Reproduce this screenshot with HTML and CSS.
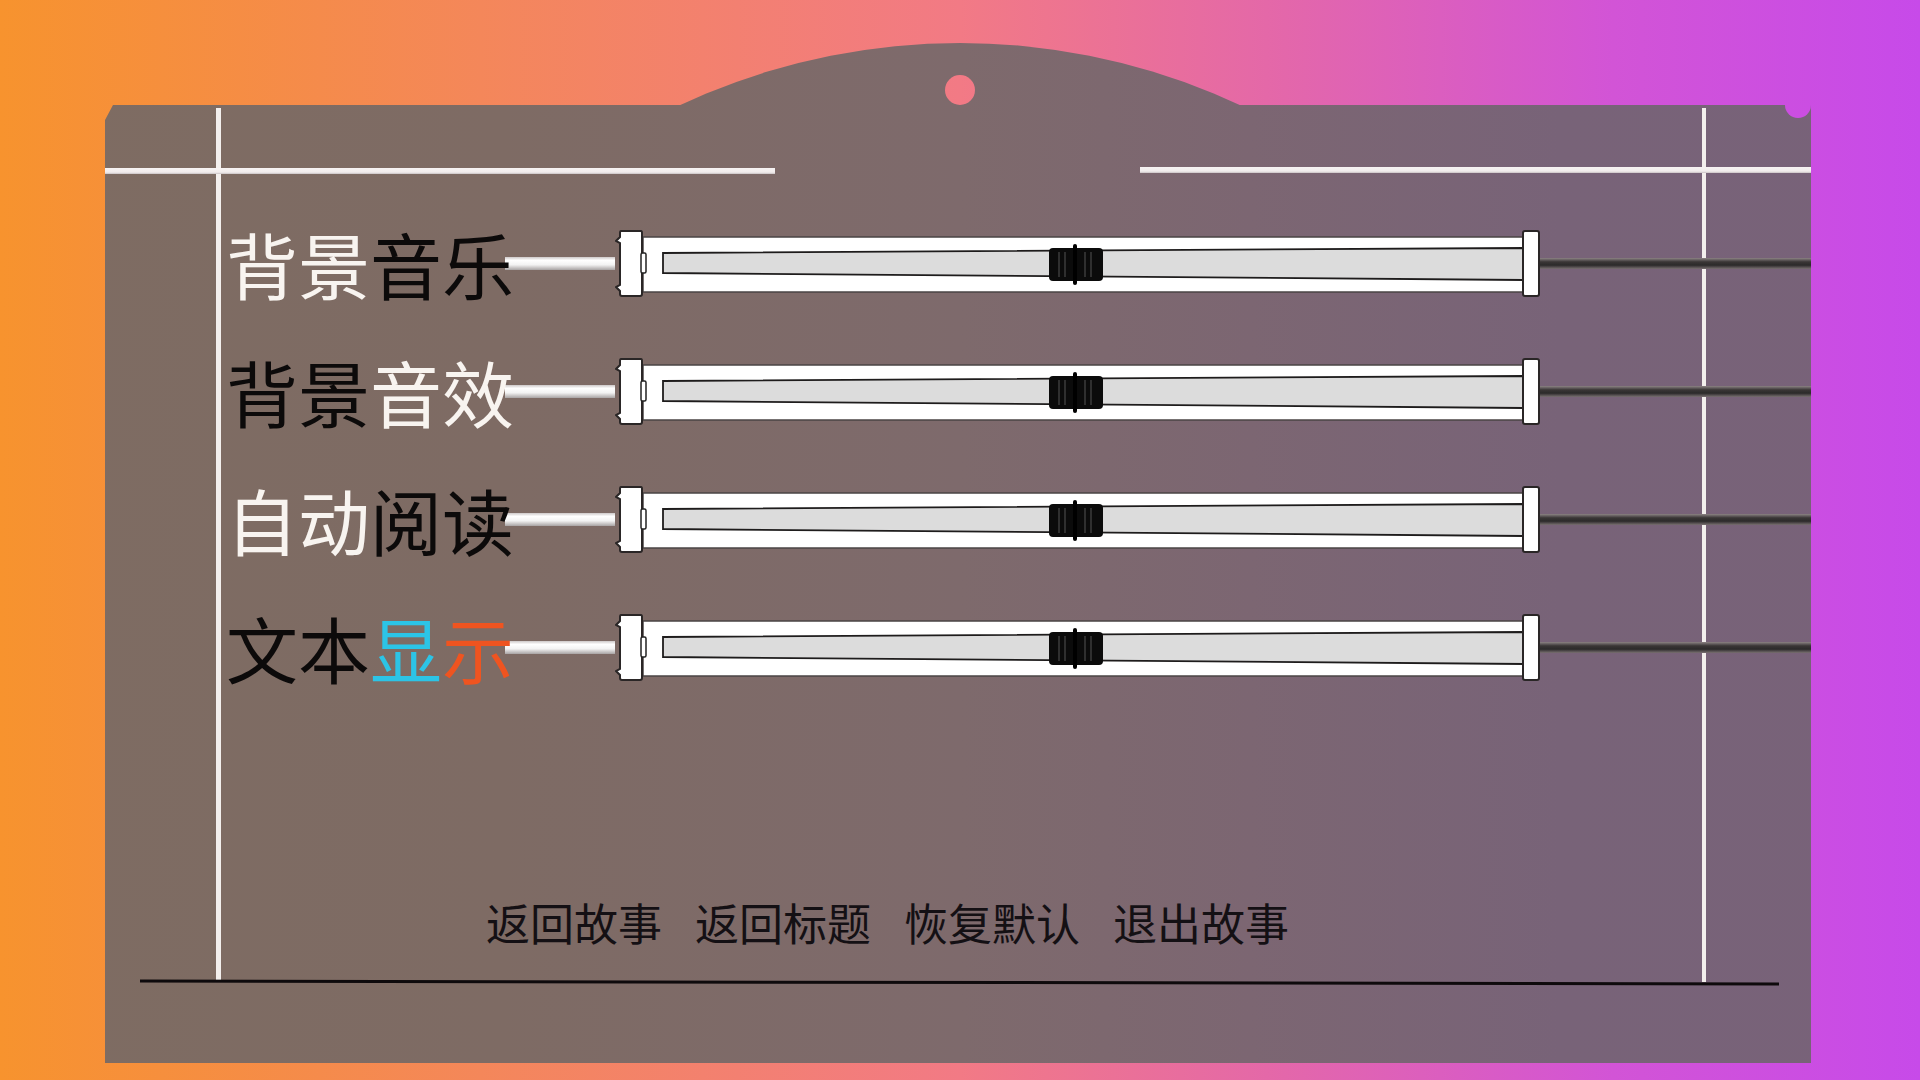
FILE: index.html
```html
<!DOCTYPE html>
<html lang="zh-CN">
<head>
    <meta charset="UTF-8">
    <meta name="viewport" content="width=device-width, initial-scale=1.0">
    <title>设置</title>
    <link rel="stylesheet" href="styles.css">
</head>
<body>
    <div class="stage">
        <div class="arch"></div>
        <div class="hole"></div>
        <div class="notch"></div>

        <div class="panel">
            <div class="frame"></div>

            <div class="content">
                <div class="top-lines">
                    <div class="hline hline-left"></div>
                    <div class="hline hline-right"></div>
                </div>

                <div class="rows">
                    <div class="row">
                        <div class="label"><span class="w">背景</span><span class="k">音乐</span></div>
                        <div class="connector"></div>
                        <svg class="slider" viewBox="0 0 925 67" width="925" height="67">
                            <rect x="28" y="7" width="880" height="55" fill="#fff" stroke="#4a4444" stroke-width="1.5"/>
                            <path d="M6,1 L26,1 Q27,1 27,3 L27,64 Q27,66 25,66 L7,66 Q5,66 5,64 L5,61 L1,57 L5,55 L5,13 L1,11 L5,7 L5,3 Q5,1 6,1 Z" fill="#fff" stroke="#2a2626" stroke-width="2"/>
                            <rect x="26" y="23" width="5" height="20" rx="1.5" fill="#fff" stroke="#222" stroke-width="1.5"/>
                            <polygon points="48,23 908,18 908,50 48,43" fill="#dcdcdc" stroke="#1e1c1c" stroke-width="1.8"/>
                            <rect x="908" y="1" width="16" height="65" rx="2" fill="#fff" stroke="#2a2626" stroke-width="2"/>
                            <rect x="434" y="18" width="54" height="33" rx="4" fill="#0b0b0b"/>
                            <g stroke="#3c3c3c" stroke-width="1.5">
                                <line x1="444" y1="22" x2="444" y2="47"/>
                                <line x1="450" y1="22" x2="450" y2="47"/>
                                <line x1="470" y1="22" x2="470" y2="47"/>
                                <line x1="476" y1="22" x2="476" y2="47"/>
                            </g>
                            <rect x="458" y="14" width="4" height="41" rx="2" fill="#000"/>
                        </svg>
                        <div class="rod"></div>
                    </div>

                    <div class="row">
                        <div class="label"><span class="k">背景</span><span class="w">音效</span></div>
                        <div class="connector"></div>
                        <svg class="slider" viewBox="0 0 925 67" width="925" height="67">
                            <rect x="28" y="7" width="880" height="55" fill="#fff" stroke="#4a4444" stroke-width="1.5"/>
                            <path d="M6,1 L26,1 Q27,1 27,3 L27,64 Q27,66 25,66 L7,66 Q5,66 5,64 L5,61 L1,57 L5,55 L5,13 L1,11 L5,7 L5,3 Q5,1 6,1 Z" fill="#fff" stroke="#2a2626" stroke-width="2"/>
                            <rect x="26" y="23" width="5" height="20" rx="1.5" fill="#fff" stroke="#222" stroke-width="1.5"/>
                            <polygon points="48,23 908,18 908,50 48,43" fill="#dcdcdc" stroke="#1e1c1c" stroke-width="1.8"/>
                            <rect x="908" y="1" width="16" height="65" rx="2" fill="#fff" stroke="#2a2626" stroke-width="2"/>
                            <rect x="434" y="18" width="54" height="33" rx="4" fill="#0b0b0b"/>
                            <g stroke="#3c3c3c" stroke-width="1.5">
                                <line x1="444" y1="22" x2="444" y2="47"/>
                                <line x1="450" y1="22" x2="450" y2="47"/>
                                <line x1="470" y1="22" x2="470" y2="47"/>
                                <line x1="476" y1="22" x2="476" y2="47"/>
                            </g>
                            <rect x="458" y="14" width="4" height="41" rx="2" fill="#000"/>
                        </svg>
                        <div class="rod"></div>
                    </div>

                    <div class="row">
                        <div class="label"><span class="w">自动</span><span class="k">阅读</span></div>
                        <div class="connector"></div>
                        <svg class="slider" viewBox="0 0 925 67" width="925" height="67">
                            <rect x="28" y="7" width="880" height="55" fill="#fff" stroke="#4a4444" stroke-width="1.5"/>
                            <path d="M6,1 L26,1 Q27,1 27,3 L27,64 Q27,66 25,66 L7,66 Q5,66 5,64 L5,61 L1,57 L5,55 L5,13 L1,11 L5,7 L5,3 Q5,1 6,1 Z" fill="#fff" stroke="#2a2626" stroke-width="2"/>
                            <rect x="26" y="23" width="5" height="20" rx="1.5" fill="#fff" stroke="#222" stroke-width="1.5"/>
                            <polygon points="48,23 908,18 908,50 48,43" fill="#dcdcdc" stroke="#1e1c1c" stroke-width="1.8"/>
                            <rect x="908" y="1" width="16" height="65" rx="2" fill="#fff" stroke="#2a2626" stroke-width="2"/>
                            <rect x="434" y="18" width="54" height="33" rx="4" fill="#0b0b0b"/>
                            <g stroke="#3c3c3c" stroke-width="1.5">
                                <line x1="444" y1="22" x2="444" y2="47"/>
                                <line x1="450" y1="22" x2="450" y2="47"/>
                                <line x1="470" y1="22" x2="470" y2="47"/>
                                <line x1="476" y1="22" x2="476" y2="47"/>
                            </g>
                            <rect x="458" y="14" width="4" height="41" rx="2" fill="#000"/>
                        </svg>
                        <div class="rod"></div>
                    </div>

                    <div class="row">
                        <div class="label"><span class="k">文本</span><span class="cyan">显</span><span class="red">示</span></div>
                        <div class="connector"></div>
                        <svg class="slider" viewBox="0 0 925 67" width="925" height="67">
                            <rect x="28" y="7" width="880" height="55" fill="#fff" stroke="#4a4444" stroke-width="1.5"/>
                            <path d="M6,1 L26,1 Q27,1 27,3 L27,64 Q27,66 25,66 L7,66 Q5,66 5,64 L5,61 L1,57 L5,55 L5,13 L1,11 L5,7 L5,3 Q5,1 6,1 Z" fill="#fff" stroke="#2a2626" stroke-width="2"/>
                            <rect x="26" y="23" width="5" height="20" rx="1.5" fill="#fff" stroke="#222" stroke-width="1.5"/>
                            <polygon points="48,23 908,18 908,50 48,43" fill="#dcdcdc" stroke="#1e1c1c" stroke-width="1.8"/>
                            <rect x="908" y="1" width="16" height="65" rx="2" fill="#fff" stroke="#2a2626" stroke-width="2"/>
                            <rect x="434" y="18" width="54" height="33" rx="4" fill="#0b0b0b"/>
                            <g stroke="#3c3c3c" stroke-width="1.5">
                                <line x1="444" y1="22" x2="444" y2="47"/>
                                <line x1="450" y1="22" x2="450" y2="47"/>
                                <line x1="470" y1="22" x2="470" y2="47"/>
                                <line x1="476" y1="22" x2="476" y2="47"/>
                            </g>
                            <rect x="458" y="14" width="4" height="41" rx="2" fill="#000"/>
                        </svg>
                        <div class="rod"></div>
                    </div>
                </div>

                <div class="menu">
                    <span class="menu-item">返回故事</span>
                    <span class="menu-item">返回标题</span>
                    <span class="menu-item">恢复默认</span>
                    <span class="menu-item">退出故事</span>
                </div>

                <div class="baseline"></div>
            </div>
        </div>
    </div>
</body>
</html>
```

FILE: styles.css
```css
html, body {
    margin: 0;
    padding: 0;
}

body {
    width: 1920px;
    height: 1080px;
    overflow: hidden;
    box-sizing: border-box;
    padding: 105px 0 0 105px;
    font-family: "Noto Sans CJK SC", "Noto Sans", sans-serif;
    background: linear-gradient(90deg, #f7932e 0%, #f4875a 25%, #f27a85 50%, #e468a8 66%, #d254d6 84%, #c74ae9 100%);
}

.stage {
    position: relative;
    width: 1706px;
}

/* board colour, shared by the board and its arch */
.panel, .arch {
    background: linear-gradient(90deg, #7e6c62 0px, #7e6b64 500px, #7e6a6c 960px, #7c6672 1250px, #786378 1560px, #786279 1920px) fixed;
}

.arch {
    position: absolute;
    left: 575px;
    top: -62px;
    width: 560px;
    height: 64px;
    clip-path: circle(663px at 280px 663px);
}

.hole, .notch {
    position: absolute;
    border-radius: 50%;
    background: linear-gradient(90deg, #f7932e 0%, #f4875a 25%, #f27a85 50%, #e468a8 66%, #d254d6 84%, #c74ae9 100%) fixed;
}

.hole {
    left: 840px;
    top: -30px;
    width: 30px;
    height: 30px;
}

.notch {
    left: 1680px;
    top: -13px;
    width: 26px;
    height: 26px;
    z-index: 2;
}

.panel {
    display: grid;
    width: 1706px;
    height: 958px;
    clip-path: polygon(8px 0, 100% 0, 100% 100%, 0 100%, 0 15px);
}

.frame, .content {
    grid-area: 1 / 1;
}

.frame {
    margin: 3px 0 0 111px;
    width: 1481px;
    height: 874px;
    border-left: 5px solid #f3efed;
    border-right: 4px solid #f3efed;
}

.content {
    display: flex;
    flex-direction: column;
}

.top-lines {
    display: flex;
    justify-content: space-between;
    align-items: flex-start;
    margin-top: 62px;
}

.hline {
    height: 6px;
    background: linear-gradient(#f7f3f3, #f1ecec 70%, #c9c2c4);
}

.hline-left {
    width: 670px;
    margin-top: 1px;
}

.hline-right {
    width: 671px;
}

.rows {
    margin-top: 25px;
}

.row {
    display: flex;
    align-items: center;
    height: 128px;
}

.label {
    width: 279px;
    padding-left: 121px;
    font-size: 72px;
    line-height: 1;
    white-space: nowrap;
    position: relative;
    z-index: 1;
}

.w { color: #f8f4f0; }
.k { color: #0c0a0a; }
.cyan { color: #2cc4e6; }
.red { color: #ef5420; }

.connector {
    width: 110px;
    height: 13px;
    background: linear-gradient(#cdc8c8, #ffffff 25%, #f3f3f3 60%, #a8a3a3);
}

.slider {
    display: block;
    flex: none;
}

.rod {
    flex: 1;
    height: 11px;
    background: linear-gradient(#8c8384, #3a3636 35%, #2c2a2a 65%, #7a7072);
}

.menu {
    display: flex;
    gap: 33px;
    margin-top: 186px;
    padding-left: 381px;
    font-size: 44px;
    line-height: 50px;
    color: #141014;
}

.baseline {
    margin: 34px 0 0 35px;
    width: 1639px;
    height: 3px;
    background: #0e0a0c;
    transform: rotate(0.1deg);
}
```
